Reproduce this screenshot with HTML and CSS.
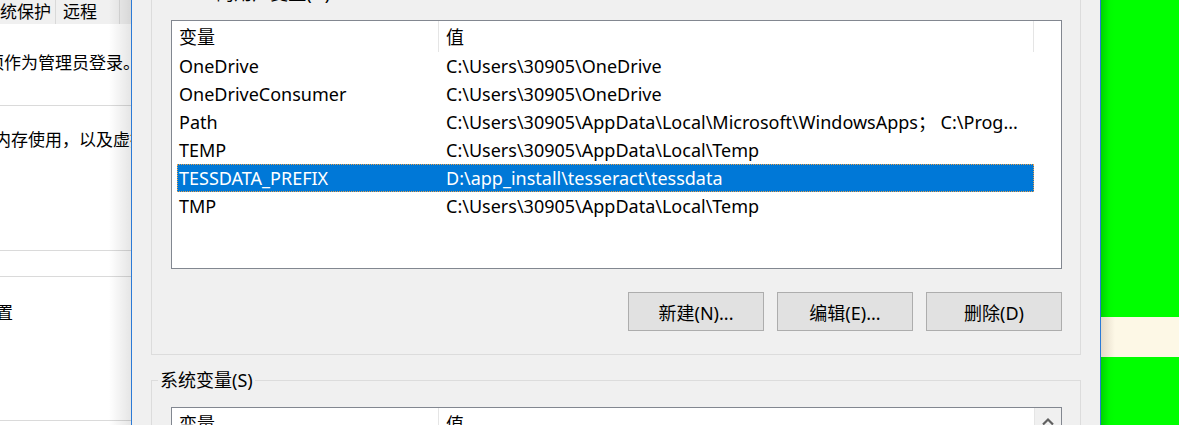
FILE: index.html
```html
<!DOCTYPE html>
<html lang="zh-CN">
<head>
<meta charset="utf-8">
<title>环境变量</title>
<link rel="stylesheet" href="styles.css">
</head>
<body>
<div class="screen">
  <div class="behind">
    <div class="tabs">
      <span class="tab tab-first">系统保护</span>
      <span class="tab tab-second">远程</span>
    </div>
    <div class="pane">
      <p class="line line-login">要进行大多数更改，你必须作为管理员登录。</p>
      <div class="rule rule-a"></div>
      <p class="line line-perf">视觉效果，处理器计划，内存使用，以及虚拟内存</p>
      <div class="rule rule-b"></div>
      <div class="rule rule-c"></div>
      <p class="line line-profile">与登录帐户相关的桌面设置</p>
      <div class="rule rule-d"></div>
    </div>
    <div class="shade"></div>
  </div>

  <div class="dialog">
    <fieldset class="group group-user">
      <legend>30905 的用户变量(U)</legend>
      <div class="listbox listbox-user">
        <div class="list-header">
          <div class="hcol hcol-name">变量</div>
          <div class="hcol hcol-value">值</div>
        </div>
        <div class="row"><span class="cell-name">OneDrive</span><span class="cell-value">C:\Users\30905\OneDrive</span></div>
        <div class="row"><span class="cell-name">OneDriveConsumer</span><span class="cell-value">C:\Users\30905\OneDrive</span></div>
        <div class="row"><span class="cell-name">Path</span><span class="cell-value">C:\Users\30905\AppData\Local\Microsoft\WindowsApps；&nbsp;C:\Prog...</span></div>
        <div class="row"><span class="cell-name">TEMP</span><span class="cell-value">C:\Users\30905\AppData\Local\Temp</span></div>
        <div class="row row-selected"><span class="cell-name">TESSDATA_PREFIX</span><span class="cell-value">D:\app_install\tesseract\tessdata</span></div>
        <div class="row"><span class="cell-name">TMP</span><span class="cell-value">C:\Users\30905\AppData\Local\Temp</span></div>
      </div>
      <div class="buttons">
        <button class="btn" type="button">新建(N)...</button>
        <button class="btn" type="button">编辑(E)...</button>
        <button class="btn" type="button">删除(D)</button>
      </div>
    </fieldset>

    <fieldset class="group group-system">
      <legend>系统变量(S)</legend>
      <div class="listbox listbox-system">
        <div class="list-header list-header-system">
          <div class="hcol hcol-name">变量</div>
          <div class="hcol hcol-value hcol-value-system">值</div>
        </div>
        <div class="scrollbar">
          <div class="scroll-btn">
            <svg width="12" height="9" viewBox="0 0 12 9"><polyline points="1,7.5 6,2.5 11,7.5" fill="none" stroke="#606060" stroke-width="2.2"/></svg>
          </div>
        </div>
      </div>
    </fieldset>
  </div>

  <div class="desktop">
    <div class="strip"></div>
  </div>
</div>
</body>
</html>
```

FILE: styles.css
```css
html, body {
  margin: 0;
  padding: 0;
  background: #f0f0f0;
}

.screen {
  display: flex;
  width: 1179px;
  height: 425px;
  overflow: hidden;
  font-family: "Noto Sans", "Noto Sans CJK SC", sans-serif;
  color: #000;
}

/* ---------- window behind (left) ---------- */
.behind {
  position: relative;
  width: 131px;
  flex: none;
  background: #fff;
  overflow: hidden;
}

.tabs {
  display: flex;
  height: 24px;
  background: #f0f0f0;
  font-size: 17px;
  line-height: 24px;
  white-space: nowrap;
}

.tab {
  flex: none;
  border-right: 1px solid #d9d9d9;
}

.tab-first {
  margin-left: -17px;
  padding-right: 4px;
}

.tab-second {
  padding-left: 7px;
  padding-right: 22px;
}

.pane {
  display: flex;
  flex-direction: column;
}

.line {
  margin: 0;
  font-size: 17px;
  line-height: 24px;
  white-space: nowrap;
}

.line-login {
  margin-top: 27px;
  margin-left: -200px;
}

.line-perf {
  margin-top: 22px;
  margin-left: -193px;
}

.line-profile {
  margin-top: 24px;
  margin-left: -191px;
}

.rule {
  height: 1px;
  background: #dadada;
  flex: none;
}

.rule-a { margin-top: 30px; }
.rule-b { margin-top: 98px; }
.rule-c { margin-top: 25px; }
.rule-d { margin-top: 95px; }

.shade {
  position: absolute;
  top: 0;
  right: 0;
  bottom: 0;
  width: 22px;
  background: linear-gradient(to right, rgba(0, 0, 0, 0), rgba(0, 0, 0, 0.1));
}

/* ---------- dialog ---------- */
.dialog {
  width: 968px;
  flex: none;
  border-left: 1px solid #2b7ad6;
  border-right: 1px solid #2b7ad6;
  background: #f0f0f0;
  display: flex;
  flex-direction: column;
  font-size: 18px;
}

.group {
  margin: 0 19px 0 19px;
  padding: 15px 18px 23px 19px;
  border: 1px solid #dcdcdc;
  min-width: 0;
  width: 891px;
}

.group legend {
  padding: 0 2px;
  margin-left: -13px;
  line-height: 24px;
  font-size: 18px;
  white-space: nowrap;
}

.group-user {
  margin-top: -19px;
}

.group-system {
  margin-top: 13px;
}

.listbox {
  border: 1px solid #828790;
  background: #fff;
  line-height: 28px;
}

.listbox-user {
  height: 247px;
}

.listbox-system {
  display: flex;
  height: 60px;
}

.list-header {
  display: flex;
  height: 31px;
  line-height: 33px;
}

.list-header-system {
  flex: 1;
}

.hcol {
  box-sizing: border-box;
  padding-left: 7px;
  height: 31px;
  border-right: 1px solid #e5e5e5;
}

.hcol-name {
  width: 267px;
}

.hcol-value {
  width: 595px;
}

.hcol-value-system {
  width: 596px;
  border-right: 1px solid #e5e5e5;
}

.row {
  display: grid;
  grid-template-columns: 269px 1fr;
  margin-left: 5px;
  width: 857px;
  height: 28px;
  box-sizing: border-box;
  white-space: nowrap;
}

.cell-name {
  padding-left: 2px;
  overflow: hidden;
}

.cell-value {
  overflow: hidden;
}

.row-selected {
  background: #0078d7;
  color: #fff;
  outline: 1px dotted #e8a04a;
  outline-offset: -1px;
}

.buttons {
  display: flex;
  justify-content: flex-end;
  gap: 13px;
  margin-top: 23px;
}

.btn {
  width: 136px;
  height: 39px;
  box-sizing: border-box;
  border: 1px solid #adadad;
  background: #e1e1e1;
  font-family: "Noto Sans", "Noto Sans CJK SC", sans-serif;
  font-size: 18px;
  color: #000;
  padding: 0;
}

.scrollbar {
  width: 26px;
  flex: none;
  background: #f0f0f0;
}

.scroll-btn {
  display: flex;
  justify-content: center;
  padding-top: 9px;
}

/* ---------- desktop (right) ---------- */
.desktop {
  flex: 1;
  background: linear-gradient(to right, #00d400 0, #00fa00 8px, #00ff00 14px);
}

.strip {
  margin-top: 317px;
  height: 40px;
  background: linear-gradient(to right, #e3dac8 0, #fdf8e6 14px);
}
```
